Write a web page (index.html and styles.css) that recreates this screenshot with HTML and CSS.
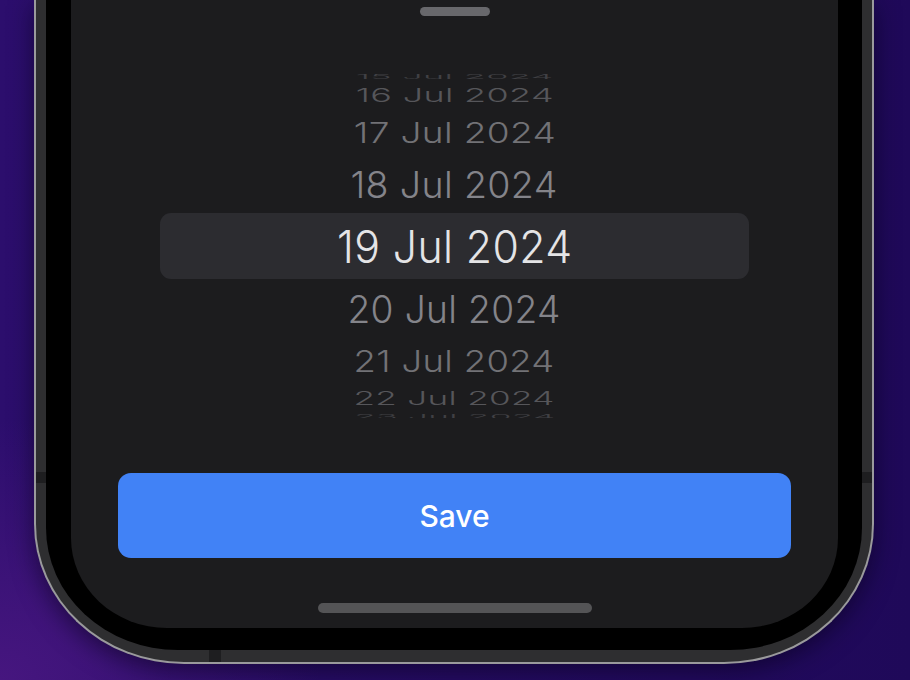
FILE: index.html
```html
<!DOCTYPE html>
<html lang="en">
<head>
<meta charset="utf-8">
<title>Date picker</title>
<link rel="stylesheet" href="styles.css">
</head>
<body>
<div class="stage">
  <div class="phone">
    <span class="antenna antenna-left"></span>
    <span class="antenna antenna-right"></span>
    <span class="antenna antenna-bottom"></span>
    <div class="bezel">
      <div class="screen">
        <div class="grabber"></div>
        <div class="wheel">
          <div class="row r15"><span class="txt">15 Jul 2024</span></div>
          <div class="row r16"><span class="txt">16 Jul 2024</span></div>
          <div class="row r17"><span class="txt">17 Jul 2024</span></div>
          <div class="row r18"><span class="txt">18 Jul 2024</span></div>
          <div class="row r19"><span class="txt">19 Jul 2024</span></div>
          <div class="row r20"><span class="txt">20 Jul 2024</span></div>
          <div class="row r21"><span class="txt">21 Jul 2024</span></div>
          <div class="row r22"><span class="txt">22 Jul 2024</span></div>
          <div class="row r23"><span class="txt">23 Jul 2024</span></div>
        </div>
        <button class="save">Save</button>
        <div class="home"></div>
      </div>
    </div>
  </div>
</div>
</body>
</html>
```
FILE: styles.css
```css
html, body {
  margin: 0;
  padding: 0;
}
body {
  width: 910px;
  height: 680px;
  overflow: hidden;
  font-family: Inter, "Noto Sans", "Liberation Sans", sans-serif;
  background:
    radial-gradient(ellipse 320px 260px at 0% 100%, #46167f 0%, rgba(70,22,127,0) 100%),
    linear-gradient(90deg, #2c0e6d 0%, #250b62 50%, #1f0959 100%);
}
.stage {
  display: flex;
  justify-content: flex-start;
  padding-left: 34px;
}
.phone {
  position: relative;
  width: 840px;
  height: 664px;
  background: #2e2e30;
  border: 2px solid #9a9a9c;
  border-top: none;
  border-radius: 0 0 150px 150px / 0 0 140px 140px;
  padding: 0 10px 12px 10px;
  box-sizing: border-box;
  box-shadow: 0 6px 24px rgba(5, 0, 20, 0.55);
  flex: none;
}
.antenna {
  position: absolute;
  background: #1e1e20;
}
.antenna-left {
  left: 0;
  top: 472px;
  width: 10px;
  height: 11px;
}
.antenna-right {
  right: 0;
  top: 472px;
  width: 10px;
  height: 11px;
}
.antenna-bottom {
  left: 173px;
  bottom: 0;
  width: 12px;
  height: 12px;
}
.bezel {
  height: 100%;
  background: #000;
  border-radius: 0 0 132px 132px / 0 0 122px 122px;
  padding: 0 24px 22px 25px;
  box-sizing: border-box;
}
.screen {
  height: 628px;
  background: #1c1c1e;
  border-radius: 0 0 96px 96px / 0 0 90px 90px;
  display: flex;
  flex-direction: column;
  align-items: center;
  overflow: hidden;
}
.grabber {
  margin-top: 7px;
  width: 70px;
  height: 9px;
  border-radius: 5px;
  background: #68686c;
  flex: none;
}
.wheel {
  margin-top: 58px;
  height: 344px;
  width: 100%;
  box-sizing: border-box;
  padding: 0 89px;
  display: flex;
  flex-direction: column;
  overflow: hidden;
  flex: none;
}
.row {
  flex: none;
  display: flex;
  align-items: center;
  justify-content: center;
  overflow: visible;
}
.txt {
  display: inline-block;
  font-size: 45px;
  font-weight: 300;
  line-height: 1;
  white-space: nowrap;
  letter-spacing: 0.4px;
}
.r15 { height: 10px; margin-top: -3px; }
.r16 { height: 28px; }
.r17 { height: 47px; }
.r18 { height: 57px; }
.r19 { height: 66px; background: #2c2c30; border-radius: 11px; }
.r20 { height: 58px; }
.r21 { height: 46px; }
.r22 { height: 30px; }
.r23 { height: 6px; }

.r19 .txt { color: #e4e4e6; transform: scale(0.951, 1); }
.r18 .txt { color: #84848a; transform: scale(0.835, 0.82); }
.r20 .txt { color: #84848a; transform: scale(0.826, 0.85); }
.r17 .txt { color: #727276; transform: scale(0.823, 0.64); }
.r21 .txt { color: #727276; transform: scale(0.81, 0.67); }
.r16 .txt { color: #56565a; transform: scale(0.80, 0.42); }
.r22 .txt { color: #56565a; transform: scale(0.78, 0.40); }
.r15 .txt { color: #404044; transform: scale(0.80, 0.15); }
.r23 .txt { color: #404044; transform: scale(0.78, 0.15); }

.save {
  margin-top: 55px;
  width: 673px;
  height: 85px;
  flex: none;
  border: none;
  border-radius: 13px;
  background: #4182f6;
  color: #fff;
  font-family: Inter, "Noto Sans", "Liberation Sans", sans-serif;
  font-size: 30px;
  font-weight: 500;
  padding: 0;
}
.home {
  margin-top: 45px;
  width: 274px;
  height: 10px;
  border-radius: 5px;
  background: #545456;
  flex: none;
}
```
